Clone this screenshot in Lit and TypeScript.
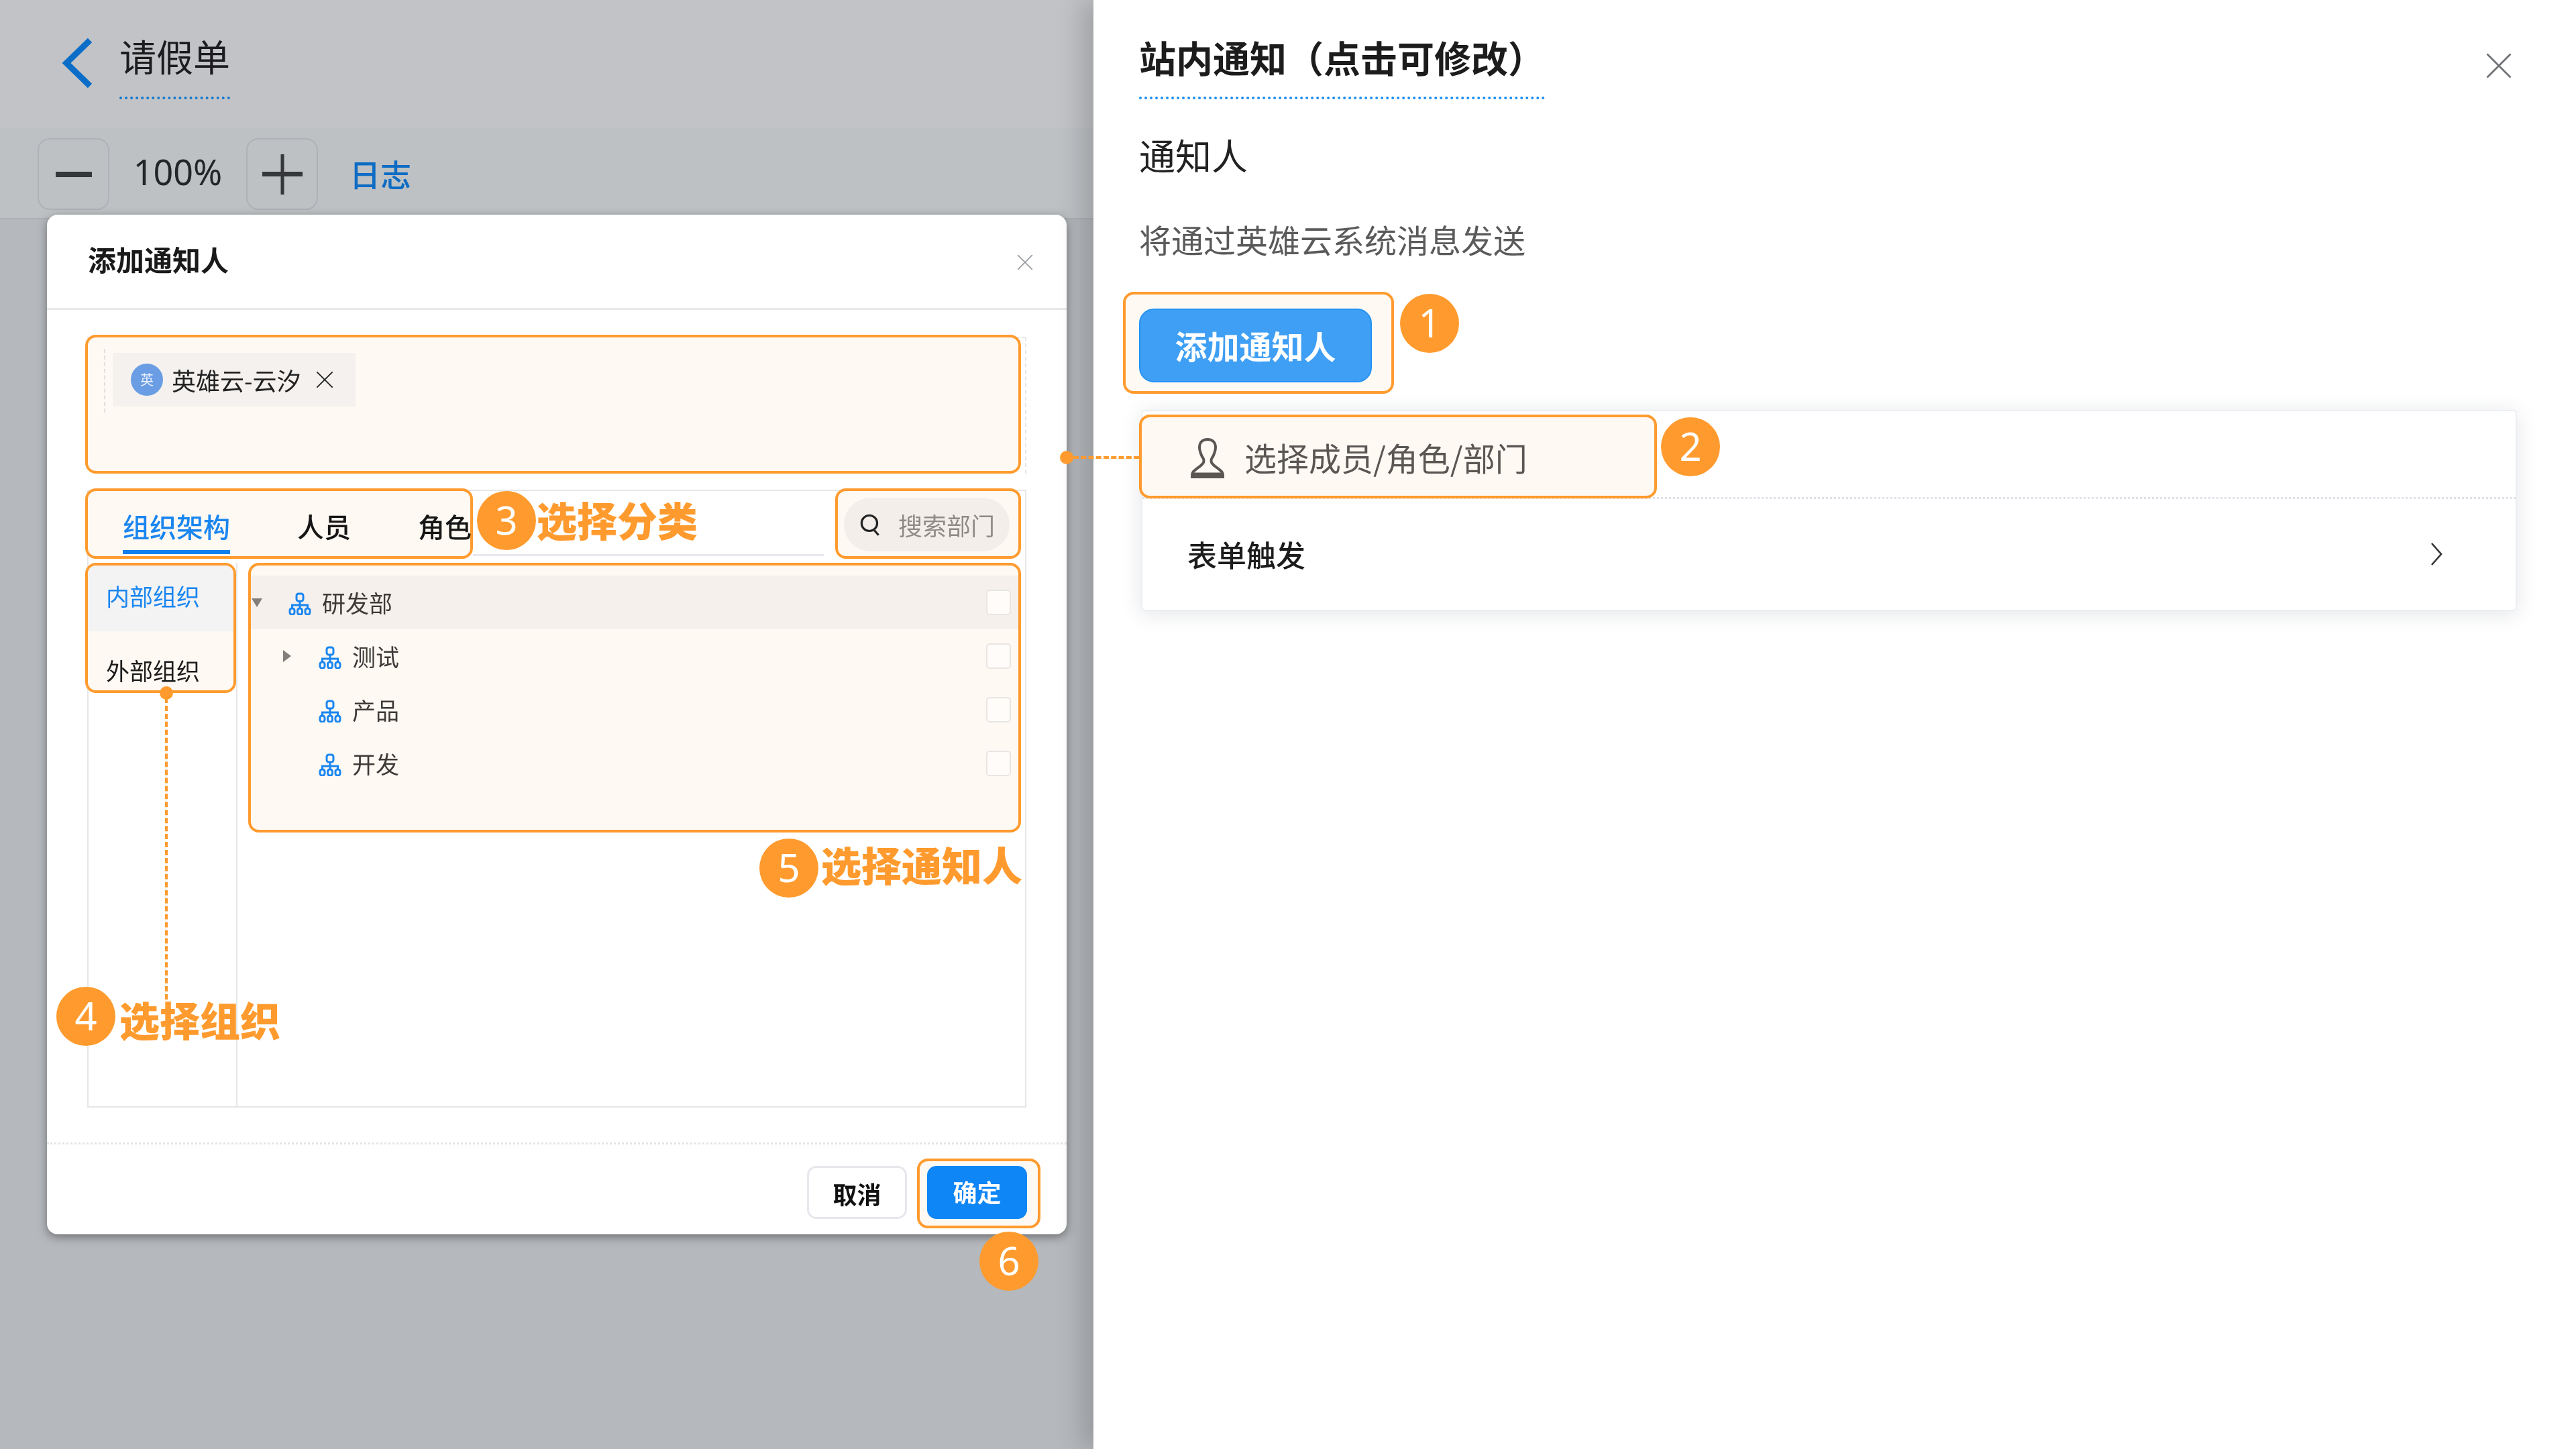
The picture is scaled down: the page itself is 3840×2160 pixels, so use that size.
import { LitElement, html, css } from "lit";
import { customElement } from "lit/decorators.js";

const orgIcon = html`<svg class="org" viewBox="0 0 34 34" fill="none" stroke="#1a86f0" stroke-width="3">
  <rect x="12" y="2" width="10" height="11" rx="3"></rect>
  <path d="M17 13v6M5.500 24v-5h23v5M17 19v5"></path>
  <rect x="2" y="24" width="7" height="9" rx="3"></rect>
  <rect x="13.500" y="24" width="7" height="9" rx="3"></rect>
  <rect x="25" y="24" width="7" height="9" rx="3"></rect>
</svg>`;

const cross = (cls: string) => html`<svg class=${cls} viewBox="0 0 24 24" fill="none" stroke="currentColor" stroke-width="1.600"><path d="M2 2l20 20M22 2L2 22"></path></svg>`;

const tree = [
  { name: "研发部", level: 0, caret: "down", active: true },
  { name: "测试", level: 1, caret: "right", active: false },
  { name: "产品", level: 1, caret: "", active: false },
  { name: "开发", level: 1, caret: "", active: false },
];

const badges = [
  { n: "1", x: 2131, y: 482 },
  { n: "2", x: 2520, y: 666 },
  { n: "3", x: 755, y: 776 },
  { n: "4", x: 128, y: 1515 },
  { n: "5", x: 1176, y: 1294 },
  { n: "6", x: 1504, y: 1880 },
];

const labels = [
  { t: "选择分类", x: 800, y: 774 },
  { t: "选择组织", x: 178, y: 1519 },
  { t: "选择通知人", x: 1224, y: 1288 },
];

@customElement("app-root")
export class AppRoot extends LitElement {
  static styles = css`
    :host {
      display: block;
      font-family: "Noto Sans CJK SC", "Noto Sans", sans-serif;
      color: #222;
    }
    * { box-sizing: border-box; }
    .page {
      position: relative;
      width: 3840px;
      height: 2160px;
      overflow: hidden;
      display: grid;
      grid-template-columns: 1630px 1fr;
      background: #fff;
      filter: blur(0.6px);
    }
    .hl {
      border: 4px solid #ff9b2e;
      border-radius: 16px;
      background: #fff9f3;
    }

    /* left */
    .left {
      background: #b5b8bc;
      display: flex;
      flex-direction: column;
      height: 2160px;
    }
    .head {
      height: 190px;
      background: #c2c3c6;
      display: flex;
      padding-left: 90px;
      align-items: flex-start;
    }
    .back { width: 52px; height: 76px; margin-top: 56px; margin-right: 36px; }
    .doc {
      font-size: 55px;
      line-height: 60px;
      margin-top: 52px;
      padding-bottom: 32px;
      border-bottom: 4px dotted #1077d0;
      color: #1c1c1e;
    }
    .tools {
      height: 137px;
      background: #bec1c4;
      border-bottom: 2px solid #adb0b4;
      display: flex;
      align-items: flex-start;
      padding: 16px 0 0 56px;
    }
    .tbtn {
      width: 107px;
      height: 107px;
      border: 2px solid #aeb1b5;
      border-radius: 18px;
      display: flex;
      align-items: center;
      justify-content: center;
    }
    .tbtn svg { width: 64px; height: 64px; }
    .pct {
      font-family: "Noto Sans", sans-serif;
      font-size: 52px;
      line-height: 100px;
      width: 204px;
      text-align: center;
      color: #232527;
    }
    .log {
      font-size: 46px;
      line-height: 104px;
      margin-left: 47px;
      color: #0d6cc4;
      font-weight: 500;
    }
    .dialog {
      width: 1520px;
      height: 1520px;
      margin: -7px 0 0 70px;
      background: #fff;
      border-radius: 16px;
      box-shadow: 0 4px 14px rgba(50, 50, 55, .55);
      position: relative;
      display: flex;
      flex-direction: column;
    }
    .dhead {
      height: 142px;
      flex: none;
      border-bottom: 3px solid #e9e9ea;
      display: flex;
      align-items: center;
      justify-content: space-between;
      padding: 0 49px 9px 61px;
      font-size: 42px;
      font-weight: 700;
      color: #1a1a1a;
    }
    .dx { width: 26px; height: 26px; color: #9b9ea2; margin-top: 12px; }
    .dbody { padding: 40px 0 0 60px; flex: 1; }
    .picked-frame {
      width: 1400px;
      height: 204px;
      border: 2px dashed #e6e6e8;
      border-left: 0;
      border-bottom: 0;
    }
    .picked {
      position: relative;
      width: 1395px;
      height: 207px;
      margin: -5px 0 0 -3px;
      padding: 23px 0 0 37px;
    }
    .picked::before {
      content: "";
      position: absolute;
      left: 24px;
      top: 17px;
      height: 95px;
      border-left: 2px dashed #e3e0dd;
    }
    .tag {
      width: 362px;
      height: 80px;
      background: #f4f1ef;
      display: flex;
      align-items: center;
      padding-left: 27px;
      font-size: 36px;
      line-height: 76px;
      color: #222;
    }
    .avatar {
      width: 48px;
      height: 48px;
      border-radius: 50%;
      background: #6a9de4;
      color: #e8f0fb;
      font-size: 20px;
      line-height: 48px;
      text-align: center;
      margin-right: 13px;
    }
    .tagname { width: 214px; }
    .tx { width: 28px; height: 28px; color: #222; }

    .frame {
      width: 1400px;
      height: 921px;
      margin-top: 24px;
      border: 2px solid #e6e6e8;
    }
    .bar {
      display: flex;
      height: 105px;
      margin: -4px 6px 0 -5px;
    }
    .tabs {
      width: 578px;
      flex: none;
      height: 105px;
      display: flex;
      padding-left: 52px;
      gap: 100px;
      font-size: 40px;
      font-weight: 500;
      color: #161616;
    }
    .tab {
      flex: none;
      height: 94px;
      line-height: 60px;
      padding-top: 22px;
      white-space: nowrap;
    }
    .tab.on { color: #1a86f0; border-bottom: 6px solid #0f7ff0; }
    .spacer {
      flex: 1;
      margin: 2px 17px 4px 0;
      border-bottom: 3px solid #e8e9ee;
    }
    .searchbox {
      width: 277px;
      flex: none;
      height: 105px;
      padding: 10px 13px 7px 9px;
    }
    .pill {
      height: 80px;
      border-radius: 40px;
      background: #f3eeea;
      display: flex;
      align-items: center;
      padding-left: 22px;
      font-size: 36px;
      color: #8f8a88;
    }
    .pill svg { width: 34px; height: 38px; margin-right: 25px; }
    .panes {
      display: flex;
      margin: 6px 6px 0 -5px;
      height: 812px;
      position: relative;
    }
    .vline {
      position: absolute;
      left: 225px;
      top: 0;
      bottom: 0;
      border-left: 2px solid #e6e6e8;
    }
    .side {
      width: 225px;
      height: 194px;
      flex: none;
      overflow: hidden;
      position: relative;
      font-size: 35px;
    }
    .sitem { height: 98px; padding-left: 27px; line-height: 90px; }
    .sitem.on { background: #f3f3f4; color: #1a86f0; }
    .sitem.off { height: 92px; line-height: 116px; color: #1c1c1c; }
    .treebox {
      width: 1152px;
      height: 402px;
      margin-left: 18px;
      padding-top: 15px;
      position: relative;
      overflow: hidden;
    }
    .row {
      height: 80px;
      display: flex;
      align-items: center;
      padding-right: 11px;
      font-size: 35px;
      line-height: 76px;
      color: #3d3a38;
    }
    .row.on { background: #f5f0ec; }
    .row.l1 { padding-left: 45px; }
    .caret { width: 18px; height: 18px; margin-right: 38px; flex: none; }
    .org { width: 34px; height: 34px; margin-right: 16px; flex: none; margin-top: 4px; }
    .name { flex: 1; }
    .check {
      width: 37px;
      height: 38px;
      border: 2px solid #e8e5e3;
      border-radius: 5px;
      background: #fffcf9;
    }
    .foot {
      margin: 52px 0 0 -60px;
      height: 137px;
      border-top: 3px dotted #e4e4e6;
      display: flex;
      justify-content: flex-end;
      align-items: flex-start;
      padding: 32px 60px 0 0;
    }
    .btn {
      width: 149px;
      height: 79px;
      border-radius: 14px;
      font-size: 36px;
      line-height: 76px;
      font-weight: 700;
      text-align: center;
    }
    .cancel { border: 3px solid #e6e8ec; background: #fff; color: #111; margin-right: 15px; }
    .okwrap {
      width: 184px;
      height: 104px;
      margin: -11px -21px 0 0;
      padding: 7px 0 0 11px;
    }
    .ok { background: #0f86f5; color: #fff; }

    /* right */
    .right {
      position: relative;
      background: #fff;
      padding-left: 68px;
      box-shadow: -16px 0 36px rgba(40, 40, 45, .22);
    }
    .rtitle {
      display: inline-block;
      margin-top: 56px;
      height: 92px;
      border-bottom: 4px dotted #1a8cf0;
      font-size: 55px;
      line-height: 56px;
      font-weight: 700;
      color: #1c1c1c;
      white-space: nowrap;
    }
    .rx { position: absolute; left: 2074px; top: 77px; width: 42px; height: 42px; color: #6f7276; }
    .rsub { font-size: 54px; line-height: 60px; margin-top: 53px; color: #222; }
    .rdesc { font-size: 48px; line-height: 60px; margin-top: 65px; color: #5a5a5a; }
    .addwrap {
      width: 404px;
      height: 152px;
      margin: 49px 0 0 -24px;
      padding: 21px 0 0 20px;
    }
    .add {
      width: 347px;
      height: 110px;
      border-radius: 22px;
      background: #3f9ff4;
      border: 2px solid #2492f5;
      color: #fff;
      font-size: 48px;
      line-height: 104px;
      font-weight: 700;
      text-align: center;
    }
    .card {
      width: 2051px;
      height: 300px;
      margin: 24px 0 0 3px;
      background: #fff;
      border: 2px solid #eceef3;
      border-radius: 6px;
      box-shadow: 0 4px 30px rgba(60, 70, 90, .14);
    }
    .crow1 { height: 131px; border-bottom: 3px dotted #dfe1e8; padding-top: 5px; }
    .pick {
      width: 772px;
      height: 125px;
      margin-left: -5px;
      display: flex;
      align-items: center;
      padding-left: 68px;
      font-size: 48px;
      color: #5a5653;
    }
    .pick svg { width: 60px; height: 62px; margin-right: 25px; margin-top: 4px; }
    .crow2 {
      height: 164px;
      display: flex;
      align-items: center;
      justify-content: space-between;
      padding: 0 108px 0 67px;
      font-size: 44px;
      font-weight: 500;
      color: #1c1c1c;
    }
    .crow2 svg { width: 20px; height: 38px; }

    /* annotations */
    .badge {
      position: absolute;
      width: 88px;
      height: 88px;
      margin: -44px 0 0 -44px;
      border-radius: 50%;
      background: #ff9b2e;
      color: #fff;
      font-family: "Noto Sans", sans-serif;
      font-size: 58px;
      line-height: 86px;
      text-align: center;
      z-index: 5;
    }
    .label {
      position: absolute;
      height: 80px;
      margin-top: -40px;
      line-height: 80px;
      font-size: 60px;
      font-weight: 900;
      color: #ff9b2e;
      white-space: nowrap;
      z-index: 5;
    }
    .dot {
      position: absolute;
      width: 20px;
      height: 20px;
      border-radius: 50%;
      background: #ff9b2e;
      z-index: 5;
    }
    .dot.a { left: 1580px; top: 672px; }
    .dot.b { left: 238px; top: 1023px; }
    .dash-h {
      position: absolute;
      left: 1600px;
      top: 680px;
      width: 98px;
      border-top: 4px dashed #ff9b2e;
      z-index: 4;
    }
    .dash-v {
      position: absolute;
      left: 246px;
      top: 1040px;
      height: 450px;
      border-left: 4px dashed #ff9b2e;
      z-index: 4;
    }
  `;

  private caret(kind: string) {
    if (kind === "down") return html`<svg class="caret" viewBox="0 0 18 18"><path d="M1 3h16L9 16z" fill="#827e7b"></path></svg>`;
    if (kind === "right") return html`<svg class="caret" viewBox="0 0 18 18"><path d="M3 0l12 9-12 9z" fill="#827e7b"></path></svg>`;
    return html`<span class="caret"></span>`;
  }

  render() {
    return html`
      <div class="page">
        <section class="left">
          <div class="head">
            <svg class="back" viewBox="0 0 52 76" fill="none" stroke="#0a6dc8" stroke-width="9"><path d="M44 4L9 38l35 34"></path></svg>
            <div class="doc">请假单</div>
          </div>
          <div class="tools">
            <div class="tbtn"><svg viewBox="0 0 64 64"><path d="M5 28h54v8H5z" fill="#35373a"></path></svg></div>
            <div class="pct">100%</div>
            <div class="tbtn"><svg viewBox="0 0 64 64"><path d="M29.500 2h5v60h-5zM2 28h60v7H2z" fill="#35373a"></path></svg></div>
            <div class="log">日志</div>
          </div>
          <div class="dialog">
            <div class="dhead"><span>添加通知人</span>${cross("dx")}</div>
            <div class="dbody">
              <div class="picked-frame">
                <div class="picked hl">
                  <div class="tag">
                    <span class="avatar">英</span>
                    <span class="tagname">英雄云-云汐</span>
                    ${cross("tx")}
                  </div>
                </div>
              </div>
              <div class="frame">
                <div class="bar">
                  <div class="tabs hl">
                    <div class="tab on">组织架构</div>
                    <div class="tab">人员</div>
                    <div class="tab">角色</div>
                  </div>
                  <div class="spacer"></div>
                  <div class="searchbox hl">
                    <div class="pill">
                      <svg viewBox="0 0 30 36" fill="none" stroke="#222" stroke-width="3"><circle cx="14" cy="16" r="11"></circle><path d="M21 26l6 7"></path></svg>
                      <span>搜索部门</span>
                    </div>
                  </div>
                </div>
                <div class="panes">
                  <div class="vline"></div>
                  <div class="side hl">
                    <div class="sitem on">内部组织</div>
                    <div class="sitem off">外部组织</div>
                  </div>
                  <div class="treebox hl">
                    ${tree.map(
                      (r) => html`
                        <div class="row ${r.active ? "on" : ""} ${r.level ? "l1" : ""}">
                          ${this.caret(r.caret)} ${orgIcon}
                          <span class="name">${r.name}</span>
                          <span class="check"></span>
                        </div>
                      `
                    )}
                  </div>
                </div>
              </div>
              <div class="foot">
                <div class="btn cancel">取消</div>
                <div class="okwrap hl"><div class="btn ok">确定</div></div>
              </div>
            </div>
          </div>
        </section>

        <section class="right">
          <div class="rtitle">站内通知（点击可修改）</div>
          ${cross("rx")}
          <div class="rsub">通知人</div>
          <div class="rdesc">将通过英雄云系统消息发送</div>
          <div class="addwrap hl"><div class="add">添加通知人</div></div>
          <div class="card">
            <div class="crow1">
              <div class="pick hl">
                <svg viewBox="0 0 60 62" fill="none" stroke="#5a5653" stroke-width="4">
                  <path d="M30 3c-8 0-12 5-12 12 0 4 1 6 2 9 1 2 1 4 3 6 2 3 2 7 0 9-3 4-9 7-13 11-3 2-3 5-3 9h46c0-4 0-7-3-9-4-4-10-7-13-11-2-2-2-6 0-9 2-2 2-4 3-6 1-3 2-5 2-9 0-7-4-12-12-12z"></path>
                  <path d="M7 55h46" stroke-width="5"></path>
                </svg>
                <span>选择成员/角色/部门</span>
              </div>
            </div>
            <div class="crow2">
              <span>表单触发</span>
              <svg viewBox="0 0 20 38" fill="none" stroke="#333" stroke-width="2.600"><path d="M3 3l14 16L3 35"></path></svg>
            </div>
          </div>
        </section>

        <div class="dot a"></div>
        <div class="dash-h"></div>
        <div class="dot b"></div>
        <div class="dash-v"></div>
        ${badges.map((b) => html`<div class="badge" style="left:${b.x}px;top:${b.y}px">${b.n}</div>`)}
        ${labels.map((l) => html`<div class="label" style="left:${l.x}px;top:${l.y}px">${l.t}</div>`)}
      </div>
    `;
  }
}
